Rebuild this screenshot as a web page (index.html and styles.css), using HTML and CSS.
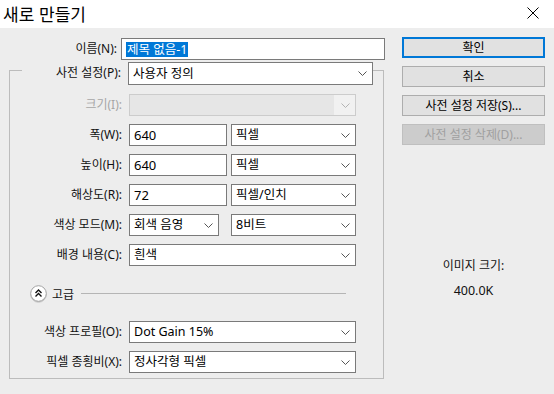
FILE: index.html
```html
<!DOCTYPE html>
<html lang="ko">
<head>
  <meta charset="UTF-8">
  <meta name="viewport" content="width=device-width, initial-scale=1.0">
  <title>새로 만들기</title>

  <link rel="stylesheet" href="styles.css">
</head>
<body>
  <div class="Window">
    <div class="TitleBar">
      <span class="TitleBar-Text">새로 만들기</span>
      <svg class="TitleBar-Close" width="12" height="12" viewBox="0 0 12 12">
        <path d="M0.5 0.5 L11.5 11.5 M11.5 0.5 L0.5 11.5" stroke="#000" stroke-width="1" fill="none" />
      </svg>
    </div>

    <div class="Dialog">
      <div class="Dialog-Main">
        <div class="NameRow">
          <label class="Label">이름(N):</label>
          <div class="Input Input-Name"><span class="Input-Selected">제목 없음-1</span></div>
        </div>

        <div class="Group">
          <div class="PresetRow">
            <label class="Label">사전 설정(P):</label>
            <div class="Select">
              <span>사용자 정의</span>
              <svg class="Select-Arrow" width="9" height="5" viewBox="0 0 9 5"><polyline points="0.5,0.5 4.5,4.5 8.5,0.5" /></svg>
            </div>
          </div>

          <div class="Row">
            <label class="Label Label-Disabled">크기(I):</label>
            <div class="Select Select-Disabled">
              <span></span>
              <svg class="Select-Arrow" width="9" height="5" viewBox="0 0 9 5"><polyline points="0.5,0.5 4.5,4.5 8.5,0.5" /></svg>
            </div>
          </div>

          <div class="Row">
            <label class="Label">폭(W):</label>
            <div class="Pair">
              <div class="Input Input-Number">640</div>
              <div class="Select Select-Unit">
                <span>픽셀</span>
                <svg class="Select-Arrow" width="9" height="5" viewBox="0 0 9 5"><polyline points="0.5,0.5 4.5,4.5 8.5,0.5" /></svg>
              </div>
            </div>
          </div>

          <div class="Row">
            <label class="Label">높이(H):</label>
            <div class="Pair">
              <div class="Input Input-Number">640</div>
              <div class="Select Select-Unit">
                <span>픽셀</span>
                <svg class="Select-Arrow" width="9" height="5" viewBox="0 0 9 5"><polyline points="0.5,0.5 4.5,4.5 8.5,0.5" /></svg>
              </div>
            </div>
          </div>

          <div class="Row">
            <label class="Label">해상도(R):</label>
            <div class="Pair">
              <div class="Input Input-Number">72</div>
              <div class="Select Select-Unit">
                <span>픽셀/인치</span>
                <svg class="Select-Arrow" width="9" height="5" viewBox="0 0 9 5"><polyline points="0.5,0.5 4.5,4.5 8.5,0.5" /></svg>
              </div>
            </div>
          </div>

          <div class="Row">
            <label class="Label">색상 모드(M):</label>
            <div class="Pair">
              <div class="Select Select-Mode">
                <span>회색 음영</span>
                <svg class="Select-Arrow" width="9" height="5" viewBox="0 0 9 5"><polyline points="0.5,0.5 4.5,4.5 8.5,0.5" /></svg>
              </div>
              <div class="Select Select-Unit">
                <span>8비트</span>
                <svg class="Select-Arrow" width="9" height="5" viewBox="0 0 9 5"><polyline points="0.5,0.5 4.5,4.5 8.5,0.5" /></svg>
              </div>
            </div>
          </div>

          <div class="Row">
            <label class="Label">배경 내용(C):</label>
            <div class="Select">
              <span>흰색</span>
              <svg class="Select-Arrow" width="9" height="5" viewBox="0 0 9 5"><polyline points="0.5,0.5 4.5,4.5 8.5,0.5" /></svg>
            </div>
          </div>

          <div class="Advanced">
            <svg class="Advanced-Toggle" width="17" height="17" viewBox="0 0 17 17">
              <circle cx="8.5" cy="8.5" r="7.8" fill="#fff" stroke="#a3a3a3" />
              <polyline points="5.5,8 8.5,5 11.5,8" fill="none" stroke="#111" stroke-width="1.4" />
              <polyline points="5.5,11.5 8.5,8.5 11.5,11.5" fill="none" stroke="#111" stroke-width="1.4" />
            </svg>
            <span class="Advanced-Text">고급</span>
            <div class="Advanced-Line"></div>
          </div>

          <div class="Row Row-Profile">
            <label class="Label">색상 프로필(O):</label>
            <div class="Select">
              <span>Dot Gain 15%</span>
              <svg class="Select-Arrow" width="9" height="5" viewBox="0 0 9 5"><polyline points="0.5,0.5 4.5,4.5 8.5,0.5" /></svg>
            </div>
          </div>

          <div class="Row">
            <label class="Label">픽셀 종횡비(X):</label>
            <div class="Select">
              <span>정사각형 픽셀</span>
              <svg class="Select-Arrow" width="9" height="5" viewBox="0 0 9 5"><polyline points="0.5,0.5 4.5,4.5 8.5,0.5" /></svg>
            </div>
          </div>
        </div>
      </div>

      <div class="Dialog-Side">
        <button class="Button Button-Default">확인</button>
        <button class="Button">취소</button>
        <button class="Button">사전 설정 저장(S)...</button>
        <button class="Button Button-Disabled">사전 설정 삭제(D)...</button>

        <div class="ImageSize">
          <div class="ImageSize-Label">이미지 크기:</div>
          <div class="ImageSize-Value">400.0K</div>
        </div>
      </div>
    </div>
  </div>
</body>
</html>
```

FILE: styles.css
```css
* {
  margin: 0;
  padding: 0;
  box-sizing: border-box;
  font-family: 'Noto Sans', 'Noto Sans CJK KR', sans-serif;
}

body {
  overflow: hidden;
  background-color: #ededed;
  width: 554px;
  height: 394px;
}

.Window {
  width: 554px;
  height: 394px;
  display: flex;
  flex-direction: column;
}

.TitleBar {
  height: 28px;
  background-color: #ffffff;
  display: flex;
  align-items: center;
  justify-content: space-between;
  padding: 0 15px 0 3px;
}

.TitleBar-Text {
  font-family: 'Noto Sans CJK KR', sans-serif;
  font-size: 17px;
  line-height: 28px;
  color: #000;
}

.TitleBar-Close {
  margin-bottom: 2px;
}

.Dialog {
  flex: 1;
  display: flex;
  padding-top: 9px;
}

.Dialog-Main {
  width: 385px;
  padding-top: 1px;
}

.Label {
  font-size: 12px;
  line-height: 22px;
  color: #111;
  text-align: right;
  white-space: nowrap;
}

.Label-Disabled {
  color: #a6a6a6;
}

.NameRow {
  display: grid;
  grid-template-columns: 117px 264px;
  column-gap: 4px;
  height: 22px;
}

.Input {
  height: 22px;
  border: 1px solid #7a7a7a;
  background-color: #ffffff;
  font-size: 13px;
  line-height: 20px;
  padding-left: 4px;
  color: #000;
  white-space: nowrap;
}

.Input-Selected {
  background-color: #0078d7;
  color: #ffffff;
  padding: 0 1px;
  display: inline-block;
  line-height: 15px;
  font-size: 12.5px;
}

.Group {
  margin: 10px 0 0 9px;
  width: 375px;
  border: 1px solid #bcbcbc;
  padding-bottom: 5px;
}

.PresetRow {
  margin: -9px 0 0 12px;
  width: 351px;
  display: grid;
  grid-template-columns: 99px 245px;
  column-gap: 7px;
  background-color: #ededed;
}

.Row {
  display: grid;
  grid-template-columns: 112px 227px;
  column-gap: 7px;
  margin-top: 8px;
  height: 22px;
}

.PresetRow + .Row {
  margin-top: 9px;
}

.Select {
  height: 22px;
  border: 1px solid #7a7a7a;
  background-color: #ffffff;
  display: flex;
  align-items: center;
  justify-content: space-between;
  padding: 0 5px 0 4px;
  font-size: 13px;
  color: #000;
  white-space: nowrap;
}

.PresetRow .Select {
  height: 23px;
}

.Select span {
  font-size: 12.5px;
  line-height: 20px;
}

.Select-Arrow {
  fill: none;
  stroke: #555;
  stroke-width: 1;
  flex-shrink: 0;
}

.Select-Disabled {
  border-color: #cccccc;
  background: linear-gradient(to right, #e6e6e6 0, #e6e6e6 204px, #f1f1f1 204px);
}

.Select-Disabled .Select-Arrow {
  stroke: #b3b3b3;
}

.Pair {
  display: flex;
  justify-content: space-between;
}

.Input-Number {
  width: 98px;
}

.Select-Unit {
  width: 125px;
}

.Select-Mode {
  width: 90px;
}

.Advanced {
  display: flex;
  align-items: center;
  margin-top: 19px;
  height: 17px;
  padding-left: 20px;
}

.Advanced-Toggle {
  filter: drop-shadow(0 1px 0.5px rgba(0, 0, 0, 0.15));
}

.Advanced-Text {
  margin-left: 5px;
  font-size: 12px;
  color: #111;
}

.Advanced-Line {
  flex: 1;
  height: 1px;
  background-color: #b5b5b5;
  margin: 0 37px 0 7px;
}

.Row-Profile {
  margin-top: 19px;
}

.Dialog-Side {
  margin-left: 17px;
  width: 143px;
  display: flex;
  flex-direction: column;
}

.Button {
  height: 21px;
  margin-bottom: 8px;
  border: 1px solid #adadad;
  background-color: #e1e1e1;
  font-size: 12px;
  color: #000;
  line-height: 18px;
}

.Button-Default {
  border: 2px solid #0078d7;
}

.Button-Disabled {
  background-color: #cccccc;
  border-color: #bfbfbf;
  color: #a0a0a0;
}

.ImageSize {
  margin-top: 105px;
  text-align: center;
  font-size: 12px;
  color: #111;
}

.ImageSize-Label {
  line-height: 16px;
}

.ImageSize-Value {
  margin-top: 9px;
  line-height: 16px;
  font-size: 12.5px;
}
```
